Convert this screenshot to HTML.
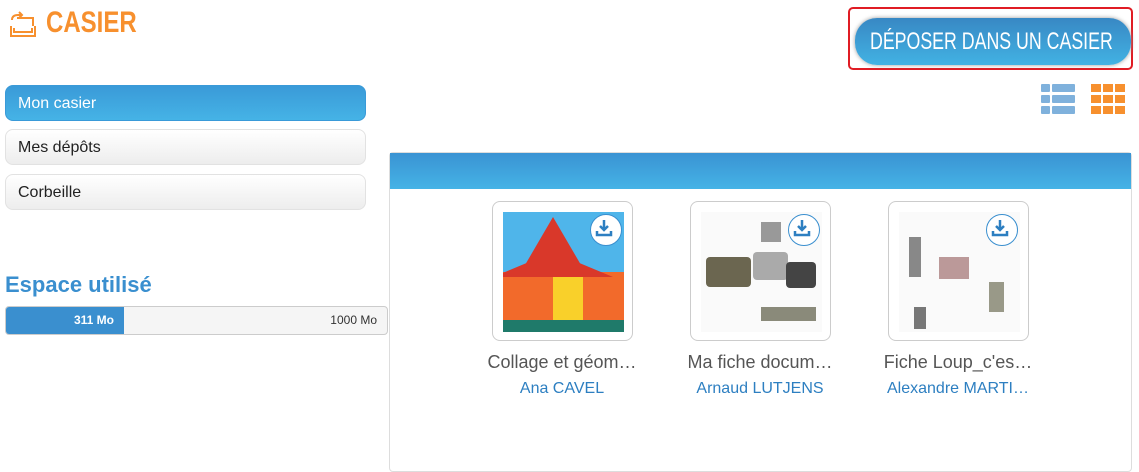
<!DOCTYPE html><html><head><style>
body{margin:0;width:1139px;height:441px;background:#fff;font-family:"Liberation Sans",sans-serif;position:relative;overflow:hidden}
.a{position:absolute}
.menu{left:5px;height:36px;border:1px solid #e2e2e2;border-radius:8px;background:linear-gradient(#fff,#ededed);font-size:16px;line-height:35px;padding-left:12px;box-sizing:border-box;width:361px;color:#222}
.card{width:141px;height:140px;border:1px solid #ccc;border-radius:8px;box-sizing:border-box;background:#fff;top:201px}
.img{left:10px;top:10px;width:121px;height:120px;overflow:hidden}
.dl{right:2px;top:2px;width:32px;height:32px;border-radius:50%;border:1.5px solid #3a8fcf;background:#fff;box-sizing:border-box}
.t{font-size:18px;color:#555;width:180px;text-align:center;top:352px}
.n{font-size:16px;color:#2d7fc1;width:180px;text-align:center;top:380px}
</style></head><body>
<svg class="a" style="left:7px;top:10px" width="32" height="30" viewBox="0 0 32 30"><g fill="none" stroke="#f7902e" stroke-width="2"><path d="M4 16v10h24V16M7 18v4h18v-4"/><path d="M5 10q0-5 6-5h3"/><path d="M12 2l3 3-3 3"/><path d="M10 8h16v8"/></g></svg>
<div class="a" style="left:46px;top:6px;font-size:30px;color:#f7902e;transform:scaleX(0.8);transform-origin:0 0;font-weight:bold">CASIER</div>
<div class="a" style="left:848px;top:7px;width:285px;height:63px;border:2px solid #e01c24;border-radius:5px;box-sizing:border-box"></div>
<div class="a" style="left:855px;top:18px;width:276px;height:47px;border-radius:22px;background:linear-gradient(#3888c4,#42b2e3);box-shadow:0 0 4px #999"></div>
<div class="a" style="left:870px;top:29px;font-size:24px;color:#fff;white-space:nowrap;transform:scaleX(0.74);transform-origin:0 0;line-height:26px">DÉPOSER DANS UN CASIER</div>
<svg class="a" style="left:1041px;top:84px" width="34" height="30"><g fill="#7fb1dc"><rect x="0" y="0" width="9" height="8" rx="1"/><rect x="11" y="0" width="23" height="8" rx="1"/><rect x="0" y="11" width="9" height="8" rx="1"/><rect x="11" y="11" width="23" height="8" rx="1"/><rect x="0" y="22" width="9" height="8" rx="1"/><rect x="11" y="22" width="23" height="8" rx="1"/></g></svg>
<svg class="a" style="left:1091px;top:84px" width="34" height="30"><g fill="#f7902e"><rect x="0" y="0" width="10" height="8"/><rect x="12" y="0" width="10" height="8"/><rect x="24" y="0" width="10" height="8"/><rect x="0" y="11" width="10" height="8"/><rect x="12" y="11" width="10" height="8"/><rect x="24" y="11" width="10" height="8"/><rect x="0" y="22" width="10" height="8"/><rect x="12" y="22" width="10" height="8"/><rect x="24" y="22" width="10" height="8"/></g></svg>
<div class="a menu" style="top:85px;background:linear-gradient(#3a9ad8,#45b3e6);color:#fff;border-color:#3a9ad8">Mon casier</div>
<div class="a menu" style="top:129px">Mes dépôts</div>
<div class="a menu" style="top:174px">Corbeille</div>
<div class="a" style="left:5px;top:272px;font-size:22px;font-weight:bold;color:#3a8fcf">Espace utilisé</div>
<div class="a" style="left:5px;top:306px;width:383px;height:29px;border:1px solid #ccc;border-radius:4px;background:#f5f5f5;box-sizing:border-box;overflow:hidden;font-size:12px;line-height:27px">
<div class="a" style="left:0;top:0;width:118px;height:29px;background:#3a8fcf;color:#fff;font-weight:bold;text-align:right;padding-right:10px;box-sizing:border-box">311 Mo</div>
<div class="a" style="right:10px;top:0;color:#333">1000 Mo</div></div>
<div class="a" style="left:389px;top:152px;width:743px;height:320px;border:1px solid #ddd;border-radius:4px;box-sizing:border-box">
<div style="height:36px;background:linear-gradient(#3a93d3,#45b3e6)"></div></div>

<div class="a card" style="left:492px"><div class="a img" style="background:#4fb5ea">
<div class="a" style="left:0;top:60px;width:121px;height:50px;background:#f26a2b"></div>
<div class="a" style="left:-10px;top:40px;width:0;height:0;border-left:60px solid transparent;border-right:60px solid transparent;border-bottom:25px solid #d9382a"></div>
<div class="a" style="left:15px;top:5px;width:0;height:0;border-left:35px solid transparent;border-right:35px solid transparent;border-bottom:60px solid #d9382a"></div>
<div class="a" style="left:50px;top:65px;width:30px;height:45px;background:#f9d02a"></div>
<div class="a" style="left:0;top:108px;width:121px;height:12px;background:#1f7a6a"></div>
<div class="a dl"></div></div></div>
<div class="a card" style="left:690px"><div class="a img" style="background:#fafafa">
<div class="a" style="left:5px;top:45px;width:45px;height:30px;background:#6b6650;border-radius:4px"></div>
<div class="a" style="left:52px;top:40px;width:35px;height:28px;background:#aaa;border-radius:4px"></div>
<div class="a" style="left:85px;top:50px;width:30px;height:26px;background:#444;border-radius:4px"></div>
<div class="a" style="left:60px;top:10px;width:20px;height:20px;background:#999"></div>
<div class="a" style="left:60px;top:95px;width:55px;height:14px;background:#8a8a7a"></div>
<div class="a dl"></div></div></div>
<div class="a card" style="left:888px"><div class="a img" style="background:#fafafa">
<div class="a" style="left:10px;top:25px;width:12px;height:40px;background:#888"></div>
<div class="a" style="left:40px;top:45px;width:30px;height:22px;background:#b99"></div>
<div class="a" style="left:90px;top:70px;width:15px;height:30px;background:#998"></div>
<div class="a" style="left:15px;top:95px;width:12px;height:22px;background:#777"></div>
<div class="a dl"></div></div></div>

<div class="a t" style="left:472px">Collage et géom…</div><div class="a n" style="left:472px">Ana CAVEL</div>
<div class="a t" style="left:670px">Ma fiche docum…</div><div class="a n" style="left:670px">Arnaud LUTJENS</div>
<div class="a t" style="left:868px">Fiche Loup_c'es…</div><div class="a n" style="left:868px">Alexandre MARTI…</div>
<svg class="a" style="left:595px;top:219px" width="18" height="18"><path d="M9 1v9M5 7l4 4 4-4M2 12v4h14v-4" stroke="#2d7fc1" stroke-width="2.5" fill="none"/></svg>
<svg class="a" style="left:793px;top:219px" width="18" height="18"><path d="M9 1v9M5 7l4 4 4-4M2 12v4h14v-4" stroke="#2d7fc1" stroke-width="2.5" fill="none"/></svg>
<svg class="a" style="left:991px;top:219px" width="18" height="18"><path d="M9 1v9M5 7l4 4 4-4M2 12v4h14v-4" stroke="#2d7fc1" stroke-width="2.5" fill="none"/></svg>
</body></html>
